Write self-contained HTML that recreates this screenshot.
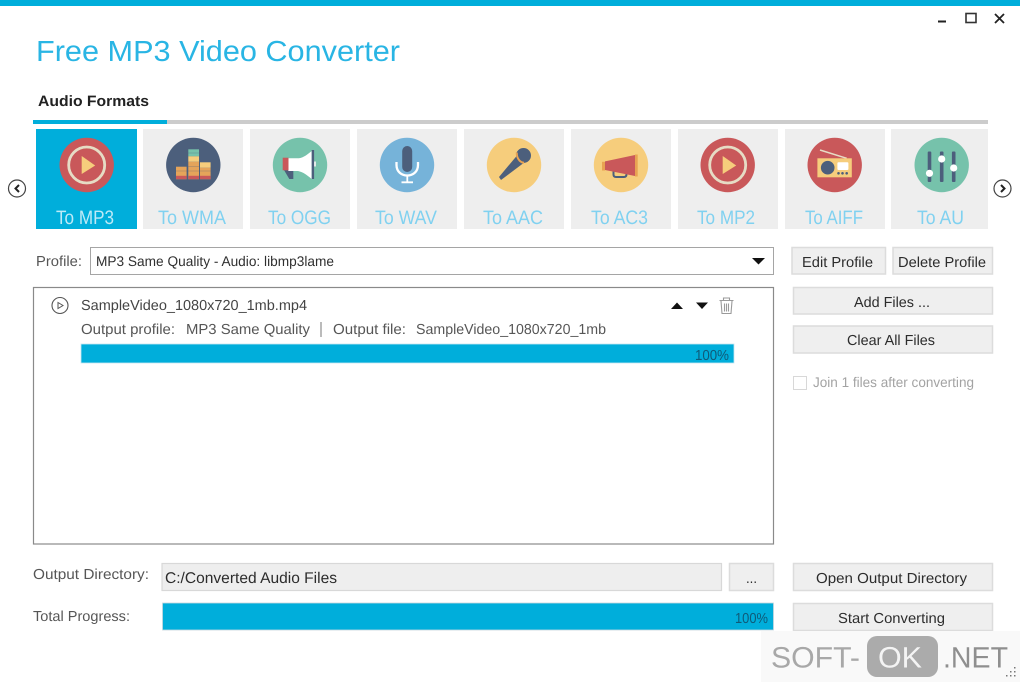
<!DOCTYPE html>
<html><head><meta charset="utf-8"><title>Free MP3 Video Converter</title>
<style>
html,body{margin:0;padding:0;background:#fff;width:1020px;height:682px;overflow:hidden}
svg{display:block}
text{font-family:"Liberation Sans",sans-serif;text-rendering:geometricPrecision}
.t{fill:#565656;font-size:14.5px}
.d{fill:#2c2c2c;font-size:14.5px}
.l{font-size:19.5px;fill:#80d1f0}
.b{fill:#efefef;stroke:#dcdcdc;stroke-width:1.5}
.tile{fill:#eeeeee}
</style></head><body>
<svg width="1020" height="682" viewBox="0 0 1020 682" xmlns="http://www.w3.org/2000/svg">
<defs>
<g id="play"><circle r="27.2" fill="#c9585a"/><circle r="18" fill="none" stroke="#e6dcc5" stroke-width="2.8"/><path d="M-5-9L8.5 .5-5 9Z" fill="#f6cd7c"/></g>
</defs>
<rect width="1020" height="6" fill="#00aedb"/>

<!-- window controls -->
<rect x="938" y="20.5" width="8" height="2" fill="#222"/>
<rect x="966" y="13.5" width="10" height="9" fill="none" stroke="#333" stroke-width="1.6"/>
<path d="M995 14L1004 23M1004 14L995 23" stroke="#222" stroke-width="1.8" fill="none"/>

<!-- title -->
<text x="36" y="61" font-size="29" fill="#29b5e4" textLength="364" lengthAdjust="spacingAndGlyphs">Free MP3 Video Converter</text>
<text x="38" y="106" font-size="15" font-weight="700" fill="#222" textLength="111" lengthAdjust="spacingAndGlyphs">Audio Formats</text>
<rect x="33" y="120" width="955" height="4" fill="#cccccc"/>
<rect x="33" y="120" width="134" height="4" fill="#00aedb"/>

<!-- nav -->
<g fill="none" stroke="#444" stroke-width="1.2"><circle cx="17" cy="188.500" r="8.500"/><circle cx="1002.500" cy="188.500" r="8.500"/></g>
<path d="M19 185L15.500 188.500 19 192" fill="none" stroke="#222" stroke-width="2"/>
<path d="M1001 185L1004.500 188.500 1001 192" fill="none" stroke="#222" stroke-width="2"/>

<!-- tiles -->
<rect x="36" y="129" width="101" height="100" fill="#00aedb"/>
<rect class="tile" x="143" y="129" width="100" height="100"/>
<rect class="tile" x="250" y="129" width="100" height="100"/>
<rect class="tile" x="357" y="129" width="100" height="100"/>
<rect class="tile" x="464" y="129" width="100" height="100"/>
<rect class="tile" x="571" y="129" width="100" height="100"/>
<rect class="tile" x="678" y="129" width="100" height="100"/>
<rect class="tile" x="785" y="129" width="100" height="100"/>
<rect class="tile" x="891" y="129" width="97" height="100"/>

<text class="l" x="56" y="224" style="fill:#bdeaf7" textLength="58" lengthAdjust="spacingAndGlyphs">To MP3</text>
<text class="l" x="158" y="224" textLength="68" lengthAdjust="spacingAndGlyphs">To WMA</text>
<text class="l" x="268" y="224" textLength="63" lengthAdjust="spacingAndGlyphs">To OGG</text>
<text class="l" x="375" y="224" textLength="62" lengthAdjust="spacingAndGlyphs">To WAV</text>
<text class="l" x="483" y="224" textLength="60" lengthAdjust="spacingAndGlyphs">To AAC</text>
<text class="l" x="591" y="224" textLength="57" lengthAdjust="spacingAndGlyphs">To AC3</text>
<text class="l" x="697" y="224" textLength="58" lengthAdjust="spacingAndGlyphs">To MP2</text>
<text class="l" x="805" y="224" textLength="58" lengthAdjust="spacingAndGlyphs">To AIFF</text>
<text class="l" x="917" y="224" textLength="47" lengthAdjust="spacingAndGlyphs">To AU</text>

<!-- MP3 -->
<use href="#play" x="86.700" y="165"/>
<!-- WMA -->
<g transform="translate(193.300 165)">
<circle r="27.200" fill="#4c5f7c"/>
<rect x="-17.300" y="1.700" width="10.600" height="12.500" fill="#e5a45a"/>
<rect x="-5" y="-15.700" width="10.700" height="7" fill="#76c2ab"/>
<rect x="-5" y="-8.700" width="10.700" height="5.500" fill="#f6cd7c"/>
<rect x="-5" y="-3.200" width="10.700" height="17.400" fill="#e5a45a"/>
<rect x="6.700" y="-2.700" width="10.600" height="5.500" fill="#f6cd7c"/>
<rect x="6.700" y="2.800" width="10.600" height="11.400" fill="#e5a45a"/>
<g fill="#c9585a"><rect x="-17.300" y="10.800" width="10.600" height="3.400"/><rect x="-5" y="10.800" width="10.700" height="3.400"/><rect x="6.700" y="10.800" width="10.600" height="3.400"/></g>
<g stroke="#4c5f7c" stroke-opacity=".35" stroke-width=".7"><path d="M-18 6H18M-5-12H6M-5 1.500H6"/></g>
</g>
<!-- OGG -->
<g transform="translate(300 165)">
<circle r="27.200" fill="#76c2ab"/>
<path d="M-16 5H-6.700V14H-10.700Z" fill="#4c5f7c"/>
<path d="M-11.700-6.700H-1C4-7.500 8-11 11.700-14V14C7 10 3 7-2 6H-11.700Z" fill="#fff"/>
<rect x="-17.300" y="-7.300" width="5.800" height="12.600" fill="#c9585a"/>
<rect x="11.700" y="-15" width="2.400" height="29" fill="#4c5f7c"/>
<rect x="14.100" y="-3.500" width="1.800" height="5" fill="#eee"/>
</g>
<!-- WAV -->
<g transform="translate(407 165)">
<circle r="27.200" fill="#76b3d9"/>
<rect x="-4.800" y="-19" width="10" height="26" rx="5" fill="#4c5f7c"/>
<path d="M-10.500-3V0C-10.500 14 11 14 11 0V-3" fill="none" stroke="#fff" stroke-width="2.300"/>
<path d="M.3 9.500V17M-5.500 17.300H6" fill="none" stroke="#fff" stroke-width="1.800"/>
</g>
<!-- AAC -->
<g transform="translate(514 165)">
<circle r="27.200" fill="#f6cd7c"/>
<path d="M2-8.300L9.300-1.700-13 15-15 12Z" fill="#4c5f7c"/>
<circle cx="9.500" cy="-9.500" r="7.500" fill="#4c5f7c"/>
<path d="M2.800-12.500C2.500-8 5-2.800 10-2.200" stroke="#e8a252" stroke-width="2" fill="none"/>
</g>
<!-- AC3 -->
<g transform="translate(621 165)">
<circle r="27.200" fill="#f6cd7c"/>
<path d="M-7.500 6V9.500Q-7.500 12-5 12H3Q5.500 12 5.500 9V8" fill="none" stroke="#4c5f7c" stroke-width="2"/>
<path d="M-19-3.200H-16V5.500H-19Z" fill="#e8a252"/>
<path d="M-16-3.600L14-10V11L-16 5Z" fill="#c9585a"/>
<rect x="14" y="-10.500" width="2.700" height="22" fill="#e8a252"/>
</g>
<!-- MP2 -->
<use href="#play" x="727.700" y="165"/>
<!-- AIFF -->
<g transform="translate(834.700 165)">
<circle r="27.200" fill="#c9585a"/>
<path d="M-14.700-15L12-6.700" stroke="#e6dcc5" stroke-width="1.500"/>
<rect x="-17.300" y="-6.700" width="34.400" height="19" fill="#f6cd7c"/>
<circle cx="-7" cy="2.700" r="6.800" fill="#4c5f7c"/>
<rect x="2.700" y="-2.700" width="11" height="7.700" rx="1" fill="#fff"/>
<g fill="#4c5f7c"><circle cx="3.800" cy="8.300" r="1.300"/><circle cx="7.800" cy="8.300" r="1.300"/><circle cx="12" cy="8.300" r="1.300"/></g>
</g>
<!-- AU -->
<g transform="translate(941.700 165)">
<circle r="27.200" fill="#76c2ab"/>
<g fill="#4c5f7c"><rect x="-14" y="-13.500" width="3.600" height="30.500" rx="1"/><rect x="-1.800" y="-13.500" width="3.600" height="30.500" rx="1"/><rect x="10.200" y="-13.500" width="3.600" height="30.500" rx="1"/></g>
<g fill="#fff"><circle cx="-12.200" cy="8.300" r="3.600"/><circle cx="0" cy="-6" r="3.600"/><circle cx="12" cy="3" r="3.600"/></g>
</g>

<!-- profile row -->
<text class="t" x="36" y="266" textLength="46" lengthAdjust="spacingAndGlyphs">Profile:</text>
<rect x="90.500" y="247.500" width="683" height="27" fill="#fff" stroke="#a5a5a5"/>
<text x="96" y="266" font-size="14" fill="#303030" textLength="238" lengthAdjust="spacingAndGlyphs">MP3 Same Quality - Audio: libmp3lame</text>
<path d="M752 258H765L758.500 264.500Z" fill="#111"/>
<rect class="b" x="792" y="247.500" width="93.500" height="26.500"/>
<text class="d" x="802" y="267" textLength="71" lengthAdjust="spacingAndGlyphs">Edit Profile</text>
<rect class="b" x="893" y="247.500" width="99.500" height="26.500"/>
<text class="d" x="898" y="267" textLength="88" lengthAdjust="spacingAndGlyphs">Delete Profile</text>

<!-- list -->
<rect x="33.500" y="287.500" width="740" height="256.500" fill="#fff" stroke="#8a8a8a" stroke-width="1.200"/>
<circle cx="60" cy="305.500" r="8" fill="none" stroke="#555" stroke-width="1.100"/>
<path d="M58 302.500L63 305.500 58 308.500Z" fill="none" stroke="#555" stroke-width="1"/>
<text class="t" x="81" y="310" style="fill:#444" textLength="226" lengthAdjust="spacingAndGlyphs">SampleVideo_1080x720_1mb.mp4</text>
<text class="t" x="81" y="334" textLength="94" lengthAdjust="spacingAndGlyphs">Output profile:</text>
<text class="t" x="186" y="334" textLength="124" lengthAdjust="spacingAndGlyphs">MP3 Same Quality</text>
<rect x="320.500" y="322" width="1" height="15" fill="#777"/>
<text class="t" x="333" y="334" textLength="73" lengthAdjust="spacingAndGlyphs">Output file:</text>
<text class="t" x="416" y="334" textLength="190" lengthAdjust="spacingAndGlyphs">SampleVideo_1080x720_1mb</text>
<rect x="81" y="344" width="653" height="19" fill="#00aedb" stroke="#c7e6f1" stroke-width=".8"/>
<text x="695" y="360" font-size="14.500" fill="#0f5a78" textLength="34" lengthAdjust="spacingAndGlyphs">100%</text>
<path d="M671 309L677 302.500 683 309Z" fill="#111"/>
<path d="M696 302.500H708L702 309Z" fill="#111"/>
<g fill="none" stroke="#9a9a9a" stroke-width="1.100">
<path d="M719.500 300.500H733.500M723.500 300V298H729.500V300M721 301L722 313.500H731L732 301M724.500 303.500V311.500M726.500 303.500V311.500M728.500 303.500V311.500"/>
</g>

<!-- side buttons -->
<rect class="b" x="793.500" y="287.500" width="199" height="26.500"/>
<text class="d" x="854" y="307" textLength="76" lengthAdjust="spacingAndGlyphs">Add Files ...</text>
<rect class="b" x="793.500" y="326" width="199" height="27"/>
<text class="d" x="847" y="345" textLength="88" lengthAdjust="spacingAndGlyphs">Clear All Files</text>
<rect x="793.500" y="376.500" width="13" height="13" fill="#fff" stroke="#d8d8d8"/>
<text x="813" y="387" font-size="14" fill="#a3a3a3" textLength="161" lengthAdjust="spacingAndGlyphs">Join 1 files after converting</text>

<!-- bottom -->
<text class="t" x="33" y="579" textLength="116" lengthAdjust="spacingAndGlyphs">Output Directory:</text>
<rect x="162" y="563.500" width="559.500" height="27" fill="#eeeeee" stroke="#d8d8d8" stroke-width="1.200"/>
<text x="165" y="583" font-size="15.500" fill="#2c2c2c" textLength="172" lengthAdjust="spacingAndGlyphs">C:/Converted Audio Files</text>
<rect class="b" x="729.500" y="563.500" width="44" height="27"/>
<text class="d" x="746" y="583" textLength="11" lengthAdjust="spacingAndGlyphs">...</text>
<rect class="b" x="793.500" y="563.500" width="199" height="27"/>
<text class="d" x="816" y="583" textLength="151" lengthAdjust="spacingAndGlyphs">Open Output Directory</text>
<text class="t" x="33" y="621" textLength="97" lengthAdjust="spacingAndGlyphs">Total Progress:</text>
<rect x="162.500" y="603" width="611" height="27" fill="#00aedb" stroke="#c7d6dc" stroke-width=".8"/>
<text x="735" y="623" font-size="14.500" fill="#0f5a78" textLength="33" lengthAdjust="spacingAndGlyphs">100%</text>
<rect class="b" x="793.500" y="603.500" width="199" height="27"/>
<text class="d" x="838" y="623" textLength="107" lengthAdjust="spacingAndGlyphs">Start Converting</text>

<!-- watermark -->
<rect x="761" y="631" width="259" height="51" fill="#f9f9f9"/>
<text x="771" y="667.500" font-size="29.500" fill="#a8a8a8" textLength="89" lengthAdjust="spacingAndGlyphs">SOFT-</text>
<rect x="867" y="636" width="71" height="41" rx="10" fill="#ababab"/>
<text x="878" y="667.500" font-size="29.500" fill="#f4f4f4" textLength="44" lengthAdjust="spacingAndGlyphs">OK</text>
<text x="943" y="667.500" font-size="29.500" fill="#8f8f8f" textLength="65" lengthAdjust="spacingAndGlyphs">.NET</text>
<g fill="#777"><rect x="1014" y="667" width="1.500" height="1.500"/><rect x="1010" y="671" width="1.500" height="1.500"/><rect x="1014" y="671" width="1.500" height="1.500"/><rect x="1006" y="675" width="1.500" height="1.500"/><rect x="1010" y="675" width="1.500" height="1.500"/><rect x="1014" y="675" width="1.500" height="1.500"/></g>
</svg>
</body></html>
